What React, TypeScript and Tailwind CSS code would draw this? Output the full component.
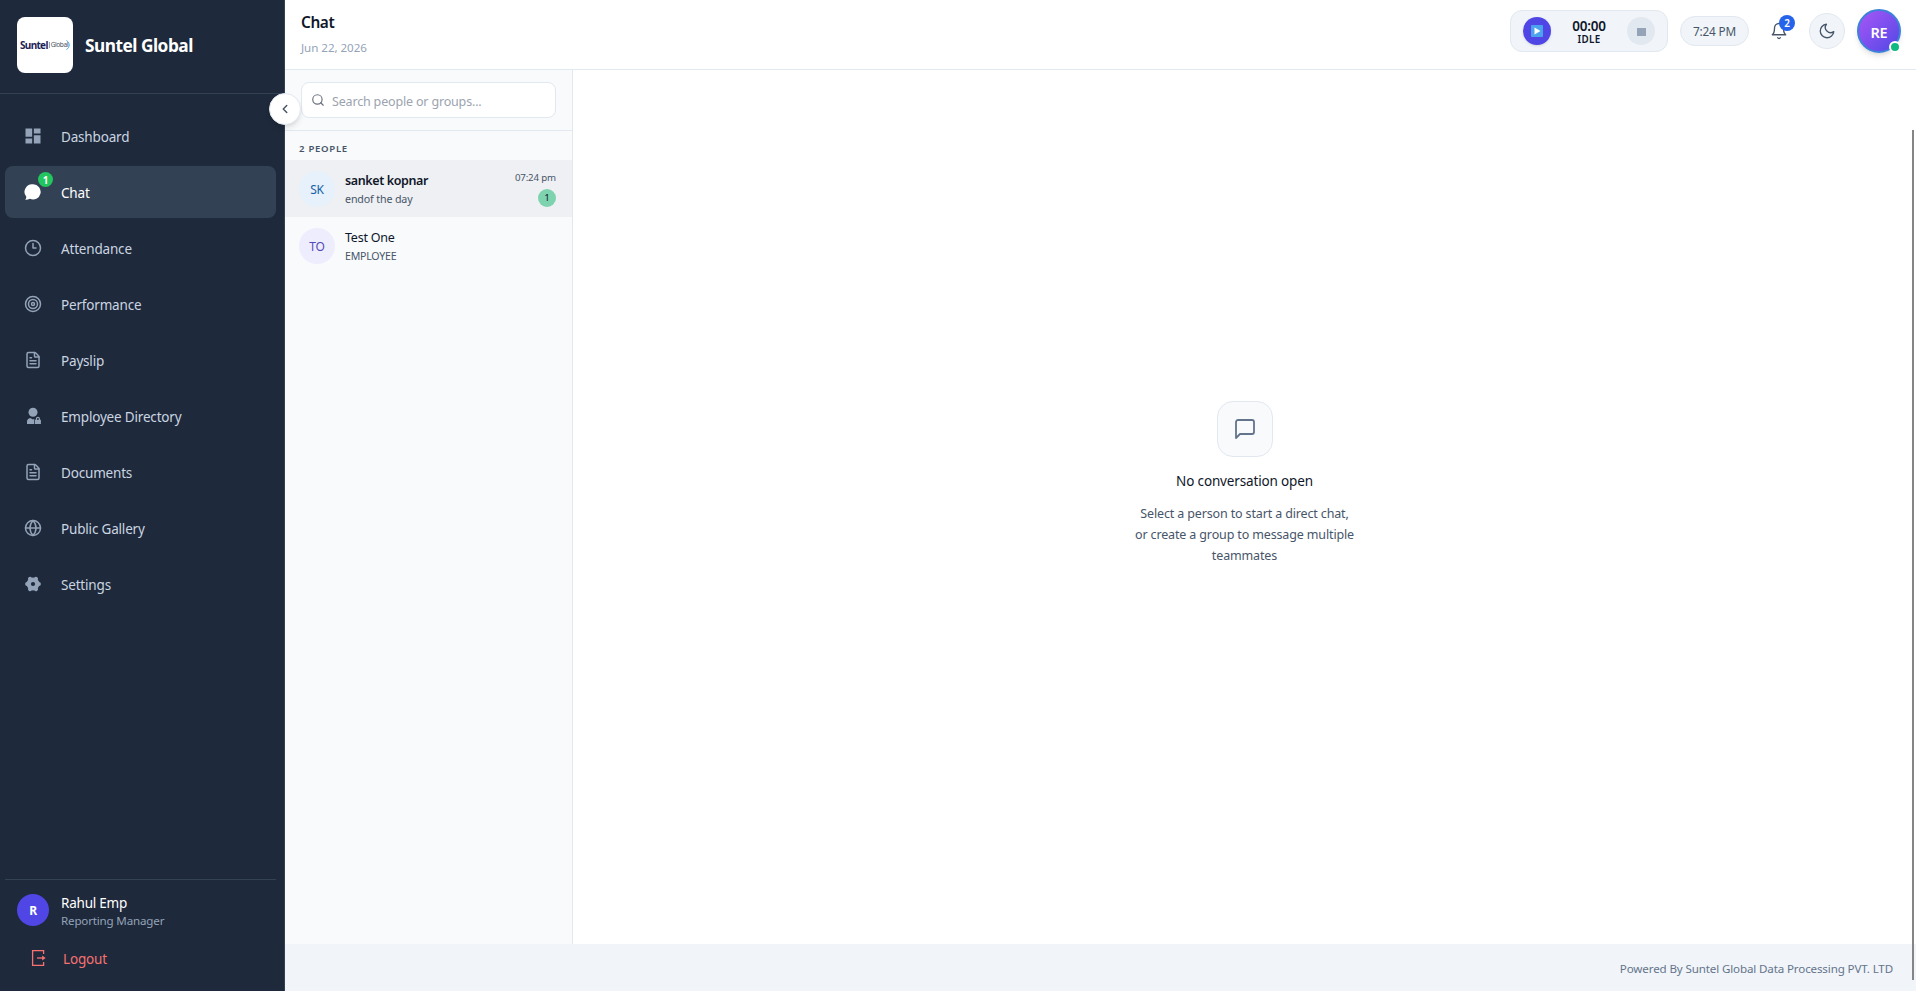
import React from 'react';
import { ChevronLeft, Clock3, FileText, Globe, Search, Target } from 'lucide-react';
import { FiBell, FiMessageSquare, FiMoon } from 'react-icons/fi';
import { MdDashboard } from 'react-icons/md';

const ChatIcon: React.FC = () => (
    <svg width="18" height="18" viewBox="0 0 18 18" fill="currentColor">
        <path d="M9.2 1.3a7.6 7.6 0 1 1-3.3 14.5c-1.4.7-3 1-4.6.9.8-1 1.1-2 1-3A7.6 7.6 0 0 1 9.2 1.3z" />
    </svg>
);

const UserLockIcon: React.FC = () => (
    <svg width="18" height="18" viewBox="0 0 18 18" fill="currentColor">
        <circle cx="9" cy="5.2" r="4.5" />
        <path d="M3 17v-2.6c0-1.8 1.3-3 3.2-3.4l2.8 1.4 1.3-.6v5.2z" />
        <path fillRule="evenodd" d="M11 17v-4.2h.8v-.9a2.1 2.1 0 0 1 4.2 0v.9h.9V17zm2-4.2h1.8v-.9a.9.9 0 0 0-1.8 0z" />
    </svg>
);

const GearIcon: React.FC = () => (
    <svg width="18" height="18" viewBox="0 0 18 18" fill="none" stroke="currentColor">
        <circle cx="9" cy="9" r="4.3" strokeWidth="4.4" />
        <path
            d="M3.1 9h1M13.9 9h1M6 3.8l.5.9M11.5 13.3l.5.9M12 3.8l-.5.9M6.5 13.3l-.5.9"
            strokeWidth="4"
            strokeLinecap="round"
        />
    </svg>
);

const LogoutIcon: React.FC = () => (
    <svg width="18" height="18" viewBox="0 0 18 18" fill="none" stroke="currentColor" strokeWidth="1.3">
        <path d="M13.6 5V1.7H2.6v14.6h11V13" />
        <path d="M7 9h6.5" />
        <path d="M12.2 6.6 15.6 9l-3.4 2.4z" fill="currentColor" stroke="none" />
    </svg>
);

const navItems = [
    { label: 'Dashboard', icon: <MdDashboard size={20} className="shrink-0" /> },
    { label: 'Chat', icon: <ChatIcon />, badge: 1 },
    { label: 'Attendance', icon: <Clock3 size={18} /> },
    { label: 'Performance', icon: <Target size={18} /> },
    { label: 'Payslip', icon: <FileText size={18} /> },
    { label: 'Employee Directory', icon: <UserLockIcon /> },
    { label: 'Documents', icon: <FileText size={18} /> },
    { label: 'Public Gallery', icon: <Globe size={18} /> },
    { label: 'Settings', icon: <GearIcon /> },
];

const Logo: React.FC = () => (
    <div className="flex h-14 w-14 shrink-0 items-center justify-center rounded-lg bg-white">
        <span className="text-[10px] font-bold leading-none tracking-[-0.7px] text-[#1e1f55]">Suntel</span>
        <span className="ml-px border-l border-gray-400 pl-px text-[6.5px] leading-none tracking-[-0.4px] text-gray-600">Global</span>
        <svg className="-ml-[2px]" width="4" height="10" viewBox="0 0 4 10" fill="none" stroke="#38a3d1" strokeWidth="1">
            <path d="M.5.5C4 2.5 4 7.5.5 9.5" />
        </svg>
    </div>
);

const Sidebar: React.FC = () => (
    <aside className="relative flex w-[285px] shrink-0 flex-col border-r border-[#334155] bg-[#1e293b]">
        <div className="flex h-[94px] shrink-0 items-center gap-3 border-b border-[#334155] px-[17px] pb-[3px]">
            <Logo />
            <span className="mt-[2px] text-[17.3px] font-bold tracking-[-0.5px] text-white">Suntel Global</span>
        </div>

        <nav className="flex flex-1 flex-col gap-1 pl-[5px] pr-2 pt-4">
            {navItems.map((item) => (
                <div
                    key={item.label}
                    className={`flex h-[52px] items-center rounded-lg pl-[19px] ${item.badge ? 'bg-[#334155] text-white' : 'text-[#cbd5e1]'}`}
                >
                    <span className={`relative flex h-[18px] w-[18px] items-center justify-center ${item.badge ? 'text-white' : 'text-[#94a3b8]'}`}>
                        {item.icon}
                        {item.badge && (
                            <span className="absolute -top-[11px] left-[14px] flex h-[15px] w-[15px] items-center justify-center rounded-full bg-[#22c55e] pt-px text-[10px] font-bold text-white">
                                {item.badge}
                            </span>
                        )}
                    </span>
                    <span className="ml-[19px] mt-[3px] text-[13.5px] tracking-[-0.18px]">{item.label}</span>
                </div>
            ))}
        </nav>

        <div className="ml-[5px] mr-2 h-[112px] border-t border-[#334155] pt-[14px]">
            <div className="flex h-8 items-center gap-3 pl-3">
                <div className="flex h-8 w-8 items-center justify-center rounded-full bg-[#4f46e5] pt-px text-[12px] font-bold text-white">R</div>
                <div className="flex flex-col pt-[2px]">
                    <span className="text-[13.5px] leading-[18px] text-white">Rahul Emp</span>
                    <span className="text-[11.6px] leading-[17px] tracking-[-0.18px] text-[#94a3b8]">Reporting Manager</span>
                </div>
            </div>
            <div className="mt-[21px] flex h-[22px] items-center gap-[15px] pl-[25px] text-[#f87171]">
                <LogoutIcon />
                <span className="mt-[2px] text-[13.5px] tracking-[-0.15px]">Logout</span>
            </div>
        </div>

        {/* Collapse toggle */}
        <button className="absolute -right-[17px] top-[93px] z-10 flex h-8 w-8 items-center justify-center rounded-full border border-[#e2e8f0] bg-white text-[#475569] shadow-md">
            <ChevronLeft size={14} strokeWidth={2.5} />
        </button>
    </aside>
);

const Header: React.FC = () => (
    <header className="flex h-[70px] shrink-0 items-start justify-between border-b border-[#e2e8f0] bg-white pl-4 pr-[15px]">
        <div className="flex flex-col pt-3">
            <span className="text-[15.4px] font-semibold leading-[22px] tracking-[-0.4px] text-[#0f172a]">Chat</span>
            <span className="mt-1 text-[11.6px] leading-[20px] tracking-[-0.05px] text-[#94a3b8]">Jun 22, 2026</span>
        </div>
        <div className="flex h-[62px] items-center">
            <div className="flex h-[42px] w-[158px] items-center justify-between rounded-xl border border-[#e2e8f0] bg-[#f1f5f9] px-3">
                <div className="flex h-7 w-7 items-center justify-center rounded-full bg-[#4f46e5] shadow-sm">
                    <svg width="12" height="12" viewBox="0 0 12 12">
                        <rect width="12" height="12" rx="1" fill="#4ba3ee" />
                        <path d="M3.5 2.5v7L9.5 6z" fill="#fff" />
                    </svg>
                </div>
                <div className="flex flex-col items-center pt-[2px] text-[#0f172a]">
                    <span className="text-[13.5px] font-semibold leading-[15px]">00:00</span>
                    <span className="text-[9.8px] font-semibold leading-[12px] tracking-[0.3px]">IDLE</span>
                </div>
                <div className="flex h-7 w-7 items-center justify-center rounded-full bg-[#e2e8f0]">
                    <div className="mt-[2px] h-2 w-[9px] bg-[#94a3b8]" />
                </div>
            </div>
            <div className="ml-3 flex h-[30px] w-[69px] items-center justify-center rounded-full border border-[#e2e8f0] bg-[#f1f5f9] pt-px text-[11.8px] tracking-[-0.18px] text-[#475569]">
                7:24 PM
            </div>
            <div className="relative ml-[21px] flex h-[18px] w-[18px] items-center justify-center text-[#475569]">
                <FiBell size={18} strokeWidth={1.8} />
                <span className="absolute -top-[7px] left-[9px] flex h-4 w-4 items-center justify-center rounded-full bg-[#2563eb] pt-px text-[10px] font-semibold text-white">2</span>
            </div>
            <div className="ml-[21px] flex h-9 w-9 items-center justify-center rounded-full border border-[#e2e8f0] bg-[#f1f5f9] text-[#475569]">
                <FiMoon size={18} strokeWidth={1.8} />
            </div>
            <div className="relative ml-3 flex h-11 w-11 items-center justify-center rounded-full border-2 border-[#3b82d9] bg-linear-to-br from-[#a855f7] to-[#4f46e5] text-[14.5px] font-semibold text-white shadow-md">
                <span className="mt-[3px]">RE</span>
                <span className="absolute -bottom-[2px] -right-[2px] h-3 w-3 rounded-full border-2 border-white bg-[#10b981]" />
            </div>
        </div>
    </header>
);

const PeoplePanel: React.FC = () => (
    <section className="flex w-[288px] shrink-0 flex-col border-r border-[#e2e8f0] bg-[#f8fafc]">
        <div className="h-[61px] border-b border-[#e2e8f0] px-4 pt-3">
            <div className="flex h-9 items-center gap-[7px] rounded-lg border border-[#e2e8f0] bg-white pl-[9px]">
                <Search size={14} className="text-[#6b7280]" />
                <span className="mt-[4px] text-[12.5px] tracking-[-0.17px] text-[#9ca3af]">Search people or groups...</span>
            </div>
        </div>
        <div className="flex h-[29px] items-center pl-[14px] pt-[8px] text-[9.6px] font-semibold tracking-[0.7px] text-[#475569]">2 PEOPLE</div>

        <div className="flex h-[57px] items-center bg-[#eff0f3] pl-[14px] pr-4">
            <div className="flex h-9 w-9 items-center justify-center rounded-full bg-[#e6f1fb] pt-[2px] text-[12px] text-[#185fa5]">SK</div>
            <div className="ml-[10px] flex flex-1 flex-col pt-[2px]">
                <span className="text-[12.5px] font-semibold leading-[19px] tracking-[-0.38px] text-[#0f172a]">sanket kopnar</span>
                <span className="text-[10.7px] leading-[18px] tracking-[-0.15px] text-[#475569]">endof the day</span>
            </div>
            <div className="flex flex-col items-end gap-1">
                <span className="text-[9.7px] leading-[14px] tracking-[-0.15px] text-[#475569]">07:24 pm</span>
                <span className="flex h-[18px] w-[18px] items-center justify-center rounded-full bg-[#7dd3ae] pt-px text-[9.8px] text-[#0f172a]">1</span>
            </div>
        </div>

        <div className="flex h-[57px] items-center pl-[14px] pr-4">
            <div className="flex h-9 w-9 items-center justify-center rounded-full bg-[#eeedfe] pt-[2px] text-[12px] text-[#534ab7]">TO</div>
            <div className="ml-[10px] flex flex-1 flex-col pt-[2px]">
                <span className="text-[12.5px] leading-[19px] text-[#0f172a]">Test One</span>
                <span className="text-[10.6px] leading-[18px] text-[#475569]">EMPLOYEE</span>
            </div>
        </div>
    </section>
);

const EmptyConversation: React.FC = () => (
    <section className="flex flex-1 flex-col items-center bg-white pt-[331px]">
        <div className="flex h-14 w-14 items-center justify-center rounded-2xl border border-[#e2e8f0] bg-[#f8fafc] text-[#64748b]">
            <FiMessageSquare size={24} strokeWidth={1.8} />
        </div>
        <p className="mt-[14px] text-[13.5px] leading-[21px] tracking-[-0.15px] text-[#0f172a]">No conversation open</p>
        <p className="mt-[11px] text-center text-[12.5px] leading-[21px] tracking-[-0.14px] text-[#475569]">
            Select a person to start a direct chat,
            <br />
            or create a group to message multiple
            <br />
            teammates
        </p>
    </section>
);

const App: React.FC = () => {
    return (
        <div className="relative flex h-[991px] w-[1916px] overflow-hidden bg-white font-['Noto_Sans',sans-serif] tracking-[-0.014em]">
            <Sidebar />
            <main className="flex min-w-0 flex-1 flex-col">
                <Header />
                <div className="flex flex-1">
                    <PeoplePanel />
                    <EmptyConversation />
                </div>
                <footer className="flex h-[47px] shrink-0 items-center justify-end bg-[#f1f5f9] pr-[23px] pt-[3px] text-[11.6px] tracking-[-0.14px] text-[#64748b]">
                    Powered By Suntel Global Data Processing PVT. LTD
                </footer>
            </main>

            {/* Scrollbar thumb */}
            <div className="absolute right-[2px] top-[130px] h-[850px] w-[2px] bg-[#858585]" />
        </div>
    );
};

export default App;
